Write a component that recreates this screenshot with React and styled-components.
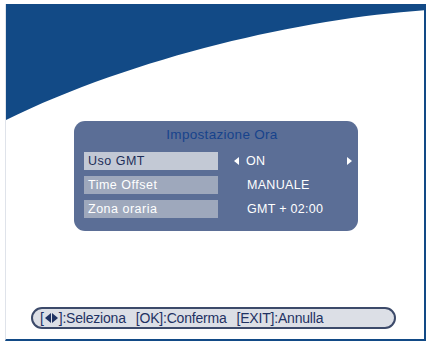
import styled, { createGlobalStyle } from "styled-components";

const Global = createGlobalStyle`
  html, body {
    margin: 0;
    padding: 0;
    background: #ffffff;
  }
  body {
    font-family: "Liberation Sans", Arial, sans-serif;
  }
`;

const Page = styled.div`
  width: 431px;
  height: 348px;
  padding: 4px 0 0 5px;
  box-sizing: border-box;
`;

const Screen = styled.div`
  position: relative;
  width: 421px;
  height: 337px;
  box-sizing: border-box;
  border-left: 1px solid #dfe3ea;
  border-right: 2px solid #124a86;
  border-bottom: 2px solid #124a86;
  display: flex;
  flex-direction: column;
  overflow: hidden;
`;

const Swoosh = styled.svg`
  position: absolute;
  left: 0;
  top: 0;
  z-index: 0;
`;

const Panel = styled.div`
  position: relative;
  z-index: 1;
  margin: 117px 0 0 68px;
  width: 284px;
  height: 110px;
  box-sizing: border-box;
  background: #5b6e96;
  border-radius: 11px;
  padding: 0 6px 0 10px;
  display: flex;
  flex-direction: column;
`;

const Title = styled.div`
  height: 24px;
  margin-bottom: 6px;
  display: flex;
  align-items: center;
  justify-content: center;
  color: #17438c;
  font-size: 13.5px;
  letter-spacing: 0.3px;
  padding: 1px 0 0 8px;
`;

const Rows = styled.div`
  display: grid;
  grid-template-columns: 134px 1fr;
  grid-auto-rows: 18px;
  row-gap: 6px;
`;

const Label = styled.div`
  background: ${(p) => (p.$active ? "#c3c9d5" : "#9ea8bc")};
  color: ${(p) => (p.$active ? "#1d2e58" : "#ffffff")};
  font-size: 12.5px;
  display: flex;
  align-items: center;
  padding-left: 4px;
  letter-spacing: 0.5px;
`;

const Value = styled.div`
  display: flex;
  align-items: center;
  color: #ffffff;
  font-size: 12.5px;
  padding-left: 29px;
  letter-spacing: 0.3px;
`;

const Selector = styled(Value)`
  padding-left: 16px;
`;

const Tri = styled.span`
  flex: none;
  width: 0;
  height: 0;
  border-top: ${(p) => p.$size || 4}px solid transparent;
  border-bottom: ${(p) => p.$size || 4}px solid transparent;
  ${(p) =>
    p.$dir === "left"
      ? `border-right: ${(p.$size || 4) + 1}px solid ${p.$color || "#ffffff"};`
      : `border-left: ${(p.$size || 4) + 1}px solid ${p.$color || "#ffffff"};`}
  display: inline-block;
`;

const OnText = styled.span`
  margin-left: 7px;
  flex: 1;
`;

const HelpBar = styled.div`
  position: relative;
  z-index: 1;
  margin: auto 0 10px 25px;
  width: 365px;
  height: 22px;
  box-sizing: border-box;
  border: 2px solid #3c4a6a;
  border-radius: 11px;
  background: #dcdfe6;
  display: flex;
  align-items: center;
  padding-left: 7px;
  color: #1f3263;
  font-size: 14px;
  letter-spacing: -0.2px;
`;

const Key = styled.span`
  display: inline-flex;
  align-items: center;
  gap: 1px;
  margin-right: ${(p) => p.$gap || 0}px;
`;

export default function App() {
  return (
    <Page>
      <Global />
      <Screen>
        <Swoosh width="421" height="130" viewBox="0 0 421 130">
          <path d="M0 0 H421 V6 C300 14 130 52 0 116 Z" fill="#124a86" />
        </Swoosh>
        <Panel>
          <Title>Impostazione Ora</Title>
          <Rows>
            <Label $active>Uso GMT</Label>
            <Selector>
              <Tri $dir="left" $size={4.5} />
              <OnText>ON</OnText>
              <Tri $dir="right" $size={4.5} />
            </Selector>
            <Label>Time Offset</Label>
            <Value>MANUALE</Value>
            <Label>Zona oraria</Label>
            <Value>GMT + 02:00</Value>
          </Rows>
        </Panel>
        <HelpBar>
          <Key $gap={10}>
            [<Tri $dir="left" $size={5} $color="#1f3263" />
            <Tri $dir="right" $size={5} $color="#1f3263" />]:Seleziona
          </Key>
          <Key $gap={10}>[OK]:Conferma</Key>
          <Key>[EXIT]:Annulla</Key>
        </HelpBar>
      </Screen>
    </Page>
  );
}
